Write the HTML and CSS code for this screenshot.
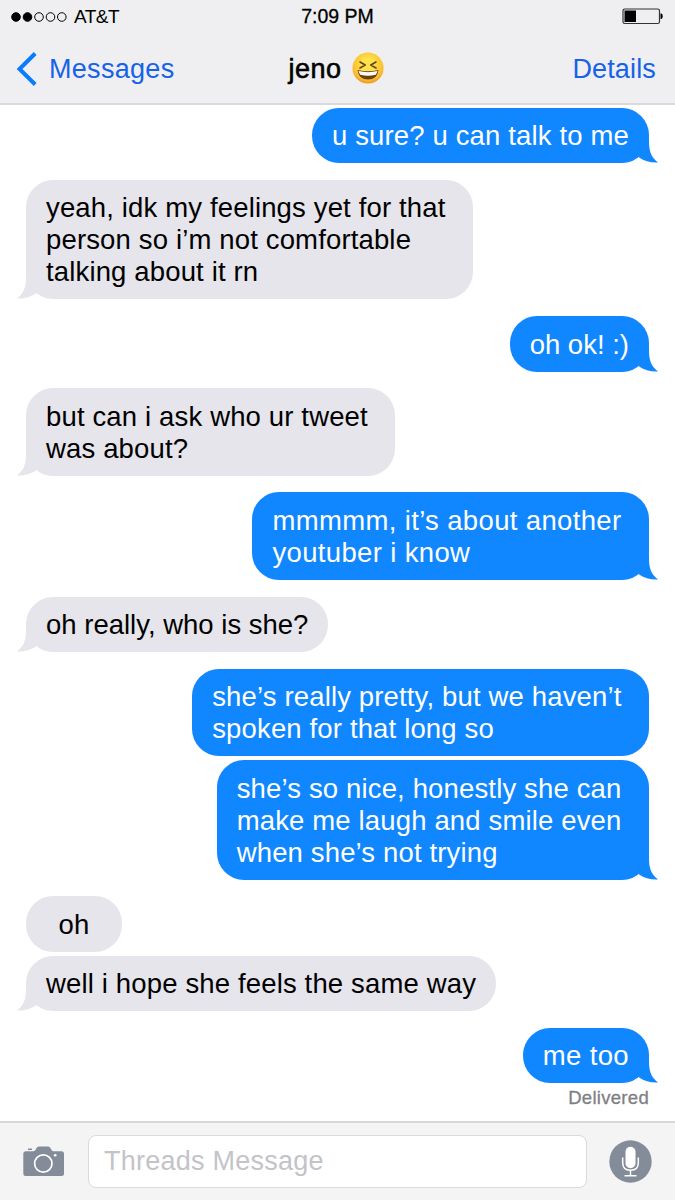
FILE: index.html
```
<!DOCTYPE html>
<html lang="en">
<head>
    <meta charset="UTF-8">
    <meta name="viewport" content="width=device-width, initial-scale=1.0">
    <title>Messages</title>
    <link rel="stylesheet" href="styles.css">
</head>
<body>
    <svg class="defs" width="0" height="0">
        <symbol id="tail" viewBox="0 0 28 26">
            <path d="M19 0V4C19 13 20.5 20 28 25.5C21 25.8 14 24.3 9.5 20.8L2 13Z" />
        </symbol>
    </svg>

    <header class="header">
        <div class="status">
            <div class="carrier">
                <svg width="56" height="12" viewBox="0 0 56 12" stroke="#000" stroke-width="1">
                    <circle cx="5" cy="6" r="4.3" />
                    <circle cx="16.5" cy="6" r="4.3" />
                    <g fill="none">
                        <circle cx="28" cy="6" r="4.3" />
                        <circle cx="39.5" cy="6" r="4.3" />
                        <circle cx="50.8" cy="6" r="4.3" />
                    </g>
                </svg>
                <span class="carrier-name">AT&amp;T</span>
            </div>
            <span class="time">7:09 PM</span>
            <svg class="battery" width="42" height="17" viewBox="0 0 42 17">
                <rect x="1" y="1" width="36.5" height="14.5" rx="1.8" fill="none" stroke="#333" stroke-width="1.2" />
                <rect x="2.5" y="2.5" width="11.5" height="11.5" />
                <path d="M38.5 5.5h1q1.2 0 1.2 2.7t-1.2 2.7h-1z" />
            </svg>
        </div>
        <div class="nav">
            <a class="back">
                <svg width="22" height="34" viewBox="0 0 22 34" fill="none" stroke="#087cff" stroke-width="4">
                    <path d="M19.2 1.5L3.5 17L19.2 32.5" />
                </svg>
                <span class="back-label">Messages</span>
            </a>
            <div class="contact">
                <span class="contact-name">jeno</span>
                <svg class="emoji" width="32" height="32" viewBox="0 0 32 32">
                    <defs>
                        <radialGradient id="face" cx="50%" cy="40%" r="60%">
                            <stop offset="0.35" stop-color="#ffe24d" />
                            <stop offset="0.8" stop-color="#fdbf2d" />
                            <stop offset="1" stop-color="#ee9424" />
                        </radialGradient>
                    </defs>
                    <circle cx="16" cy="16" r="15.5" fill="url(#face)" />
                    <path d="M8 10l5.2 3l-5.2 3M24 10l-5.2 3l5.2 3" fill="none" stroke="#70400c" stroke-width="1.6" stroke-linecap="round" stroke-linejoin="round" />
                    <path d="M5.5 18Q16 20.5 26.5 18Q25.5 27.5 16 27.5T5.5 18Z" fill="#70400c" />
                    <path d="M6.5 19Q16 21.3 25.5 19Q25 21.5 23.7 22.8Q16 24.5 8.3 22.8Q7 21.5 6.5 19Z" fill="#fff" />
                </svg>
            </div>
            <a class="details">Details</a>
        </div>
    </header>

    <main class="chat">
        <div class="bubble me">u sure? u can talk to me<svg class="tail"><use href="#tail" /></svg></div>
        <div class="bubble them multi">yeah, idk my feelings yet for that<br>person so i’m not comfortable<br>talking about it rn<svg class="tail"><use href="#tail" /></svg></div>
        <div class="bubble me tight">oh ok! :)<svg class="tail"><use href="#tail" /></svg></div>
        <div class="bubble them multi">but can i ask who ur tweet<br>was about?<svg class="tail"><use href="#tail" /></svg></div>
        <div class="bubble me multi loose">mmmmm, it’s about another<br>youtuber i know<svg class="tail"><use href="#tail" /></svg></div>
        <div class="bubble them tight">oh really, who is she?<svg class="tail"><use href="#tail" /></svg></div>
        <div class="bubble me multi grouped">she’s really pretty, but we haven’t<br>spoken for that long so</div>
        <div class="bubble me multi">she’s so nice, honestly she can<br>make me laugh and smile even<br>when she’s not trying<svg class="tail"><use href="#tail" /></svg></div>
        <div class="bubble them grouped short">oh</div>
        <div class="bubble them">well i hope she feels the same way<svg class="tail"><use href="#tail" /></svg></div>
        <div class="bubble me last loose">me too<svg class="tail"><use href="#tail" /></svg></div>
        <div class="receipt">Delivered</div>
    </main>

    <footer class="composer">
        <svg class="camera" width="42" height="31" viewBox="0 0 42 31">
            <path d="M5 2.5h4v1.5h-4z" fill="#858c99" />
            <path d="M3 5.2H10.5Q12 5.2 12.8 3.5L13.5 2Q14.3.5 16 .5H25Q26.7.5 27.5 2L28.2 3.5Q29 5.2 30.5 5.2H38.5Q41 5.2 41 7.7V27.5Q41 30 38.5 30H2.5Q.3 30 .3 27.5V7.7Q.3 5.2 3 5.2Z" fill="#858c99" />
            <circle cx="20.3" cy="17.5" r="8.7" fill="none" stroke="#fff" stroke-width="1.7" />
            <circle cx="32.2" cy="9.3" r="1.3" fill="#fff" />
        </svg>
        <div class="input">Threads Message</div>
        <svg class="mic" width="43" height="43" viewBox="0 0 43 43">
            <circle cx="21.5" cy="21.5" r="21.2" fill="#858c99" />
            <rect x="16.5" y="6.7" width="10" height="21.5" rx="5" fill="#fff" />
            <path d="M13.7 17.5v5.3q0 7.5 7.8 7.5t7.8-7.5v-5.3M21.5 30.5v5M15.5 35.7h12" fill="none" stroke="#fff" stroke-width="1.5" />
        </svg>
    </footer>
</body>
</html>
```
FILE: styles.css
```
* {
    box-sizing: border-box;
}

body {
    margin: 0;
    width: 675px;
    height: 1200px;
    display: flex;
    flex-direction: column;
    background: #fff;
    color: #000;
    font-family: "Liberation Sans", Arial, sans-serif;
    overflow: hidden;
}

svg {
    display: block;
    flex: none;
}

.defs {
    position: absolute;
}

/* header */
.header {
    height: 105px;
    background: #efeff1;
    border-bottom: 2px solid #dadadc;
}

.status {
    height: 33px;
    padding: 0 11px;
    display: grid;
    grid-template-columns: 1fr auto 1fr;
    align-items: center;
    font-size: 19.5px;
}

.carrier {
    display: flex;
    align-items: center;
    gap: 7px;
}

.carrier-name {
    font-size: 19px;
    letter-spacing: -0.5px;
}

.time {
    -webkit-text-stroke: 0.3px #000;
}

.battery {
    justify-self: end;
}

.nav {
    height: 72px;
    padding: 0 19px 0 16px;
    display: grid;
    grid-template-columns: 1fr auto 1fr;
    align-items: center;
    font-size: 27px;
}

.back {
    display: flex;
    align-items: center;
    gap: 11px;
    color: #1662e8;
}

.back-label {
    letter-spacing: 0.3px;
}

.contact {
    display: flex;
    align-items: center;
    gap: 10px;
}

.contact-name {
    letter-spacing: 0.5px;
    -webkit-text-stroke: 0.6px #000;
}

.emoji {
    margin-top: -3px;
}

.details {
    justify-self: end;
    color: #1662e8;
    letter-spacing: 0.15px;
}

/* messages */
.chat {
    flex: 1;
    padding: 2.8px 26px 0;
    display: flex;
    flex-direction: column;
}

.bubble {
    position: relative;
    margin-bottom: 16.7px;
    padding: 12.4px 20px 11.1px;
    border-radius: 27px;
    font-size: 27.5px;
    line-height: 32px;
    letter-spacing: 0.15px;
    white-space: nowrap;
}

.me {
    align-self: flex-end;
    background: #1086ff;
    color: #fff;
}

.them {
    align-self: flex-start;
    background: #e5e5eb;
}

.multi {
    padding-right: 27.5px;
}

.loose {
    letter-spacing: 0.35px;
}

.tight {
    letter-spacing: 0;
}

.grouped {
    margin-bottom: 3.8px;
}

.short {
    min-width: 96px;
    text-align: center;
}

.last {
    margin-bottom: 2.5px;
}

.tail {
    position: absolute;
    right: -9px;
    bottom: 0;
    width: 28px;
    height: 26px;
    fill: #1086ff;
}

.them .tail {
    right: auto;
    left: -9px;
    transform: scaleX(-1);
    fill: #e5e5eb;
}

.receipt {
    align-self: flex-end;
    color: #808084;
    font-size: 18.5px;
    line-height: 24px;
    letter-spacing: 0.3px;
    -webkit-text-stroke: 0.3px #808084;
}

/* message field */
.composer {
    height: 79px;
    padding: 0 23px;
    display: flex;
    align-items: center;
    background: #f4f4f5;
    border-top: 2px solid #d8d8da;
}

.input {
    width: 500px;
    height: 53px;
    margin: 0 22px 0 23px;
    padding: 0 15px;
    border: 1.5px solid #dadadf;
    border-radius: 8px;
    background: #fff;
    color: #c3c3c8;
    font-size: 27px;
    line-height: 50px;
    letter-spacing: 0.25px;
}
```
